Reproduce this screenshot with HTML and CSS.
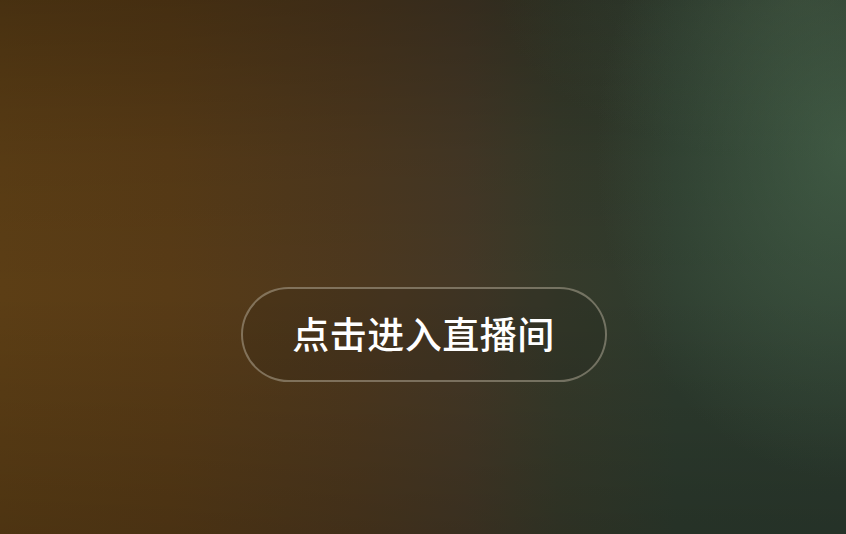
FILE: index.html
```html
<!DOCTYPE html>
<html lang="zh-CN">
<head>
<meta charset="utf-8">
<title>点击进入直播间</title>
<link rel="stylesheet" href="styles.css">
</head>
<body>
<main class="stage">
  <button class="enter-btn" type="button">点击进入直播间</button>
</main>
</body>
</html>
```
FILE: styles.css
```css
html, body {
  margin: 0;
  padding: 0;
  width: 100%;
  height: 100%;
  overflow: hidden;
}
.stage {
  width: 846px;
  height: 534px;
  display: flex;
  align-items: flex-start;
  justify-content: center;
  box-sizing: border-box;
  padding-top: 287px;
  padding-left: 1px;
  background:
    radial-gradient(ellipse 250px 330px at 846px 150px, rgba(80,115,85,0.55), rgba(80,115,85,0) 100%),
    radial-gradient(ellipse 300px 160px at 800px 0px, rgba(75,90,70,0.35), rgba(75,90,70,0) 100%),
    linear-gradient(180deg, rgba(0,0,0,0.22) 0%, rgba(0,0,0,0.05) 30%, rgba(0,0,0,0) 55%, rgba(0,0,0,0.16) 100%),
    linear-gradient(90deg, #5c3e15 0%, #583b16 20%, #4d381e 42%, #443826 55%, #363a2a 66%, #2d3b2e 80%, #2c3b2f 100%);
}
.enter-btn {
  width: 366px;
  height: 95px;
  border-radius: 48px;
  border: 2px solid rgba(200,190,170,0.45);
  background: rgba(20,20,15,0.12);
  color: #ffffff;
  font-family: "Noto Sans CJK SC", "Noto Sans", sans-serif;
  font-size: 37px;
  font-weight: 500;
  letter-spacing: 0.5px;
  padding: 0 0 4px 0;
  cursor: pointer;
}
```
